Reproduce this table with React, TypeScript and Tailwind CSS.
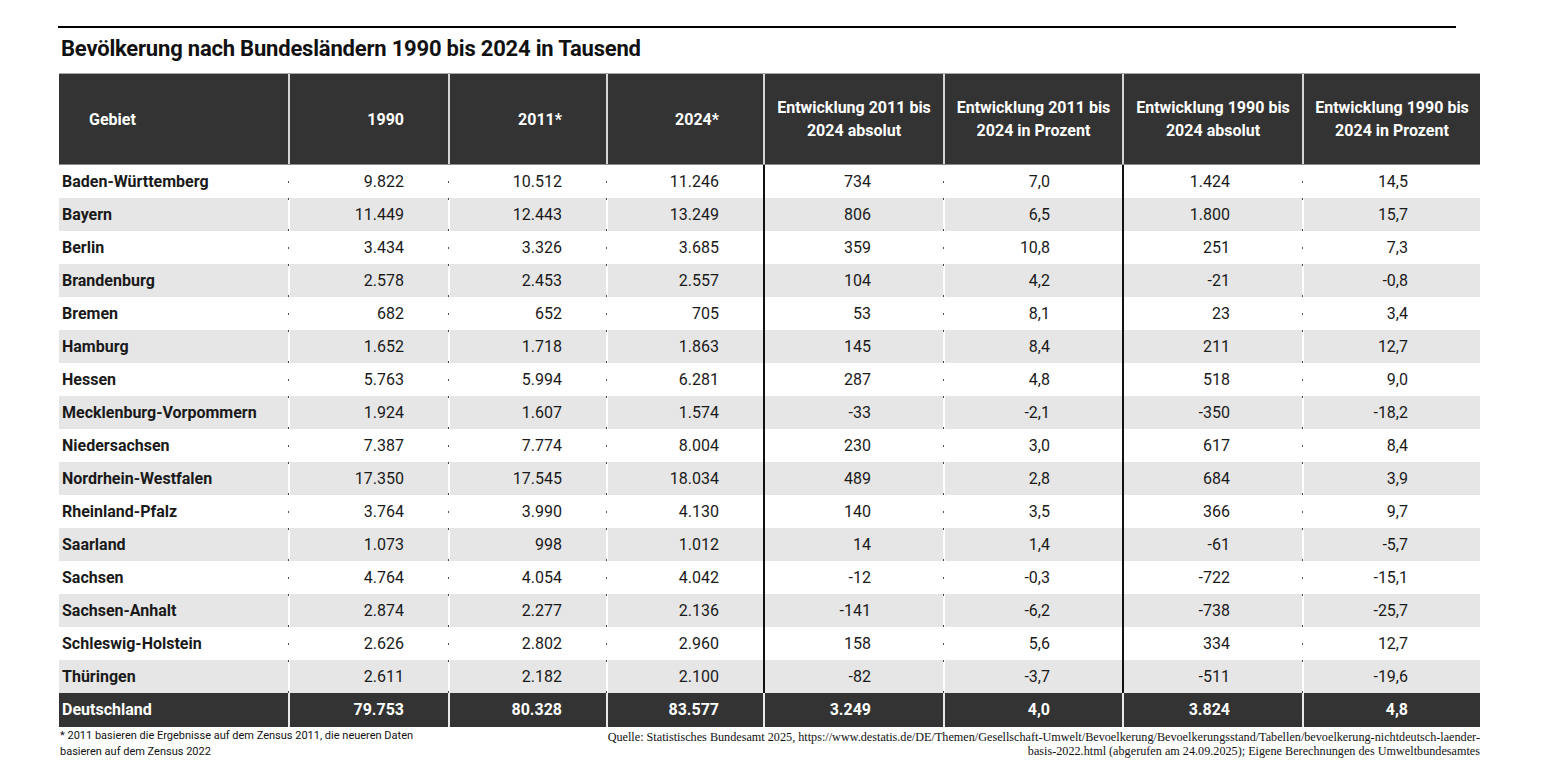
import React from "react";

const rows: string[][] = [
  ["Baden-Württemberg", "9.822", "10.512", "11.246", "734", "7,0", "1.424", "14,5"],
  ["Bayern", "11.449", "12.443", "13.249", "806", "6,5", "1.800", "15,7"],
  ["Berlin", "3.434", "3.326", "3.685", "359", "10,8", "251", "7,3"],
  ["Brandenburg", "2.578", "2.453", "2.557", "104", "4,2", "-21", "-0,8"],
  ["Bremen", "682", "652", "705", "53", "8,1", "23", "3,4"],
  ["Hamburg", "1.652", "1.718", "1.863", "145", "8,4", "211", "12,7"],
  ["Hessen", "5.763", "5.994", "6.281", "287", "4,8", "518", "9,0"],
  ["Mecklenburg-Vorpommern", "1.924", "1.607", "1.574", "-33", "-2,1", "-350", "-18,2"],
  ["Niedersachsen", "7.387", "7.774", "8.004", "230", "3,0", "617", "8,4"],
  ["Nordrhein-Westfalen", "17.350", "17.545", "18.034", "489", "2,8", "684", "3,9"],
  ["Rheinland-Pfalz", "3.764", "3.990", "4.130", "140", "3,5", "366", "9,7"],
  ["Saarland", "1.073", "998", "1.012", "14", "1,4", "-61", "-5,7"],
  ["Sachsen", "4.764", "4.054", "4.042", "-12", "-0,3", "-722", "-15,1"],
  ["Sachsen-Anhalt", "2.874", "2.277", "2.136", "-141", "-6,2", "-738", "-25,7"],
  ["Schleswig-Holstein", "2.626", "2.802", "2.960", "158", "5,6", "334", "12,7"],
  ["Thüringen", "2.611", "2.182", "2.100", "-82", "-3,7", "-511", "-19,6"],
];

const total = ["Deutschland", "79.753", "80.328", "83.577", "3.249", "4,0", "3.824", "4,8"];

const widths = ["w-[229px]", "w-[160px]", "w-[158px]", "w-[157px]", "w-[180px]", "w-[179px]", "w-[180px]", "w-[178px]"];

const headers: React.ReactNode[] = [
  "Gebiet",
  "1990",
  "2011*",
  "2024*",
  <>Entwicklung 2011 bis<br />2024 absolut</>,
  <>Entwicklung 2011 bis<br />2024 in Prozent</>,
  <>Entwicklung 1990 bis<br />2024 absolut</>,
  <>Entwicklung 1990 bis<br />2024 in Prozent</>,
];

function HeaderRow() {
  return (
    <div className="flex h-[92px] bg-[#333333] border-t border-t-[#a8a8a8] border-b border-b-[#8a8a8a]">
      {headers.map((h, i) => {
        const align =
          i === 0
            ? "justify-start pl-[30px]"
            : i <= 3
            ? "justify-end pr-[44px] text-right"
            : "justify-center text-center";
        return (
          <div
            key={i}
            className={`${widths[i]} shrink-0 flex items-center ${align} ${i > 0 ? "border-l-2 border-l-[#d4d4d4]" : ""} text-white font-bold text-[16px] leading-[23px]`}
          >
            <span>{h}</span>
          </div>
        );
      })}
    </div>
  );
}

function BodyRow({ r, idx }: { r: string[]; idx: number }) {
  const grey = idx % 2 === 1;
  return (
    <div className={`flex h-[33px] ${grey ? "bg-[#e6e6e6]" : "bg-white"}`}>
      {r.map((c, i) => {
        const thick = i === 4 || i === 6;
        const align =
          i === 0
            ? "justify-start pl-[3px] font-bold"
            : i <= 3
            ? "justify-end pr-[44px]"
            : "justify-end pr-[72px]";
        const border =
          i === 0 ? "" : thick ? "border-l-2 border-l-[#111111]" : grey ? "border-l-2 border-l-white" : "border-l-2 border-l-transparent";
        return (
          <div
            key={i}
            className={`${widths[i]} shrink-0 relative flex items-center ${align} ${border} text-[16px] text-[#1a1a1a]`}
          >
            {i > 0 && !thick && !grey && (
              <span className="absolute left-[-2px] top-[16px] w-[1px] h-[2px] bg-[#555555]" />
            )}
            {i > 0 && !thick && grey && (
              <>
                <span className="absolute left-[-2px] top-0 w-[1px] h-[2px] bg-[#444444]" />
                <span className="absolute left-[-2px] bottom-0 w-[1px] h-[2px] bg-[#444444]" />
              </>
            )}
            <span>{c}</span>
          </div>
        );
      })}
    </div>
  );
}

function TotalRow() {
  return (
    <div className="flex h-[34px] bg-[#333333]">
      {total.map((c, i) => {
        const align =
          i === 0 ? "justify-start pl-[3px]" : i <= 3 ? "justify-end pr-[44px]" : "justify-end pr-[72px]";
        return (
          <div
            key={i}
            className={`${widths[i]} shrink-0 flex items-center ${align} ${i > 0 ? "border-l-2 border-l-[#e8e8e8]" : ""} text-white font-bold text-[16px]`}
          >
            <span>{c}</span>
          </div>
        );
      })}
    </div>
  );
}

export default function App() {
  return (
    <div className="w-[1545px] h-[775px] bg-white font-['Roboto',sans-serif] overflow-hidden">
      <div className="pl-[58px] pt-[26px]">
        <div className="w-[1398px] h-[2px] bg-black" />
        <h1 className="mt-[7px] pl-[3px] text-[22px] leading-[28px] font-bold text-[#111111] tracking-[-0.2px]">
          Bevölkerung nach Bundesländern 1990 bis 2024 in Tausend
        </h1>
        <div className="mt-[10px] ml-[1px] w-[1421px]">
          <HeaderRow />
          {rows.map((r, i) => (
            <BodyRow key={i} r={r} idx={i} />
          ))}
          <TotalRow />
          <div className="flex justify-between pt-[1px]">
            <div className="pl-[1px] text-[11px] leading-[16px] text-[#111111]">
              * 2011 basieren die Ergebnisse auf dem Zensus 2011, die neueren Daten
              <br />
              basieren auf dem Zensus 2022
            </div>
            <div className="text-right font-['Liberation_Serif',serif] text-[12.2px] leading-[14px] text-[#111111] pt-[2px]">
              Quelle: Statistisches Bundesamt 2025, https://www.destatis.de/DE/Themen/Gesellschaft-Umwelt/Bevoelkerung/Bevoelkerungsstand/Tabellen/bevoelkerung-nichtdeutsch-laender-
              <br />
              basis-2022.html (abgerufen am 24.09.2025); Eigene Berechnungen des Umweltbundesamtes
            </div>
          </div>
        </div>
      </div>
    </div>
  );
}
